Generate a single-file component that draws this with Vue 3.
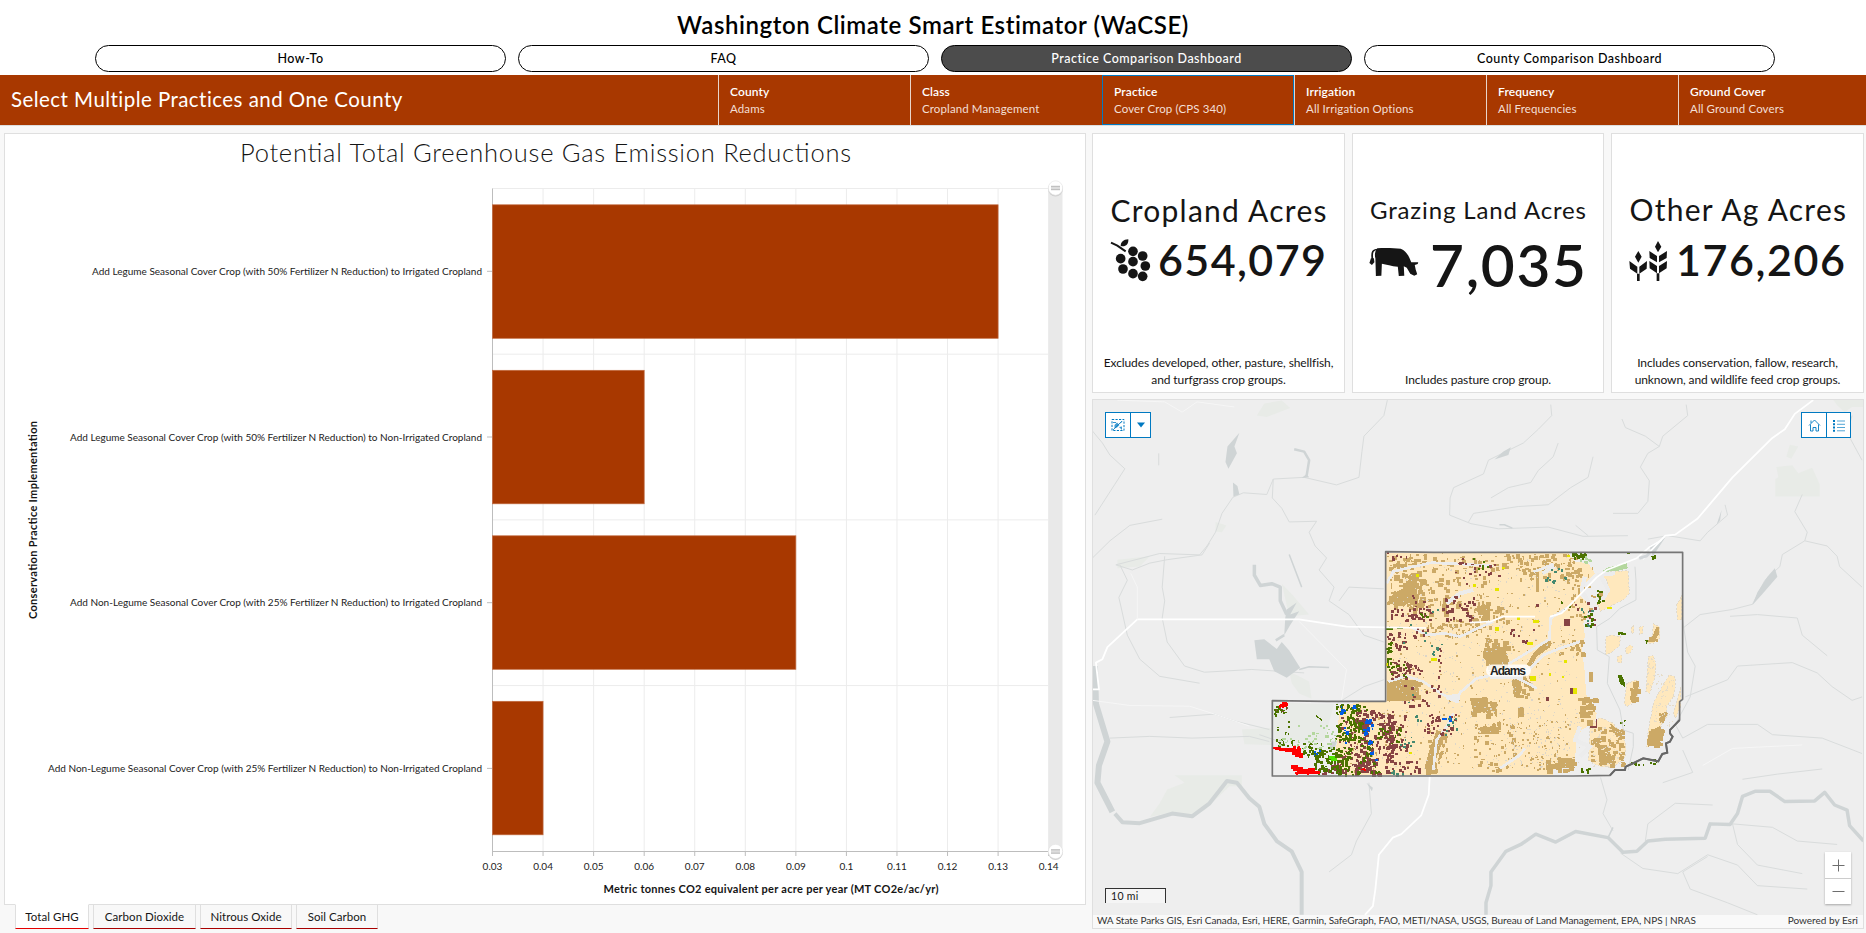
<script setup>
const pages = [
  { name: 'How-To' },
  { name: 'FAQ' },
  { name: 'Practice Comparison Dashboard', active: true },
  { name: 'County Comparison Dashboard' },
]

const filters = [
  { label: 'County', value: 'Adams' },
  { label: 'Class', value: 'Cropland Management' },
  { label: 'Practice', value: 'Cover Crop (CPS 340)', active: true },
  { label: 'Irrigation', value: 'All Irrigation Options' },
  { label: 'Frequency', value: 'All Frequencies' },
  { label: 'Ground Cover', value: 'All Ground Covers' },
]

const tabs = [
  { name: 'Total GHG', active: true, w: 74 },
  { name: 'Carbon Dioxide', w: 103 },
  { name: 'Nitrous Oxide', w: 92 },
  { name: 'Soil Carbon', w: 82 },
]

// Chart geometry
const left = 488.5
const top = 54.5
const step = 50.56
const rowH = 165.7
const ticks = ['0.03', '0.04', '0.05', '0.06', '0.07', '0.08', '0.09', '0.1', '0.11', '0.12', '0.13', '0.14']
const bars = [
  { label: 'Add Legume Seasonal Cover Crop (with 50% Fertilizer N Reduction) to Irrigated Cropland', value: 0.13, len: 390 },
  { label: 'Add Legume Seasonal Cover Crop (with 50% Fertilizer N Reduction) to Non-Irrigated Cropland', value: 0.06, len: 412 },
  { label: 'Add Non-Legume Seasonal Cover Crop (with 25% Fertilizer N Reduction) to Irrigated Cropland', value: 0.09, len: 412 },
  { label: 'Add Non-Legume Seasonal Cover Crop (with 25% Fertilizer N Reduction) to Non-Irrigated Cropland', value: 0.04, len: 434 },
]
const barW = (v) => ((v - 0.03) / 0.01) * step

// Crop parcels: seeded scatter inside zones [x, y, w, h, count, minSize, maxSize]
let seed = 7
const rnd = () => {
  seed = (seed * 16807) % 2147483647
  return seed / 2147483647
}
const snap = (v) => Math.round(v / 3) * 3
function scatter(zones) {
  let d = ''
  for (const [x, y, w, h, n, lo, hi] of zones) {
    for (let i = 0; i < n; i++) {
      const px = snap(x + rnd() * w)
      const py = snap(y + rnd() * h)
      const a = snap(lo + rnd() * (hi - lo))
      const b = snap(lo + rnd() * (hi - lo))
      d += `M${px} ${py}h${a}v${b}h-${a}z`
    }
  }
  return d
}
const parcels = [
  { color: '#cca966', d: scatter([
    [380, 60, 110, 140, 75, 4, 18], [380, 40, 570, 50, 120, 3, 14], [440, 110, 160, 110, 60, 4, 16],
    [380, 410, 90, 60, 25, 6, 22], [480, 240, 170, 45, 60, 3, 12], [630, 190, 110, 60, 45, 4, 14],
    [668, 290, 75, 90, 45, 4, 16], [630, 470, 75, 55, 22, 5, 20], [750, 390, 60, 90, 30, 4, 16],
    [640, 540, 120, 150, 55, 3, 13], [500, 570, 60, 120, 35, 4, 14], [780, 60, 180, 60, 35, 4, 14],
    [930, 80, 70, 160, 38, 4, 12], [860, 300, 110, 40, 25, 4, 14], [950, 470, 50, 70, 26, 6, 20],
    [380, 40, 570, 650, 330, 2, 7], [270, 500, 130, 200, 40, 2, 8], [860, 650, 80, 40, 30, 5, 18],
    [740, 540, 190, 150, 90, 2, 7], [640, 100, 50, 200, 30, 3, 14],
  ]) },
  { color: '#ddd6c8', d: scatter([[390, 50, 560, 640, 480, 2, 5], [260, 500, 130, 190, 60, 2, 5], [730, 530, 230, 150, 90, 2, 5]]) },
  { color: '#874444', d: scatter([
    [392, 200, 120, 40, 34, 5, 9], [545, 168, 95, 70, 38, 5, 10], [450, 165, 50, 70, 12, 4, 8],
    [380, 275, 60, 50, 24, 4, 10], [380, 360, 70, 60, 34, 4, 9], [425, 375, 60, 30, 14, 4, 9],
    [455, 260, 60, 50, 9, 5, 9], [530, 325, 10, 150, 12, 5, 8], [430, 430, 90, 70, 14, 5, 10],
    [280, 510, 120, 190, 175, 4, 13], [230, 530, 60, 160, 60, 3, 9], [380, 520, 60, 130, 40, 5, 11],
    [490, 520, 100, 60, 34, 5, 10], [400, 660, 80, 40, 18, 5, 10], [580, 40, 90, 90, 12, 4, 8],
    [630, 70, 90, 40, 10, 4, 9], [750, 255, 70, 55, 9, 5, 9], [945, 170, 60, 90, 10, 5, 9],
    [380, 35, 60, 30, 7, 4, 8], [175, 660, 80, 40, 25, 4, 9], [45, 485, 35, 30, 10, 3, 6],
    [280, 640, 60, 60, 35, 5, 13],
  ]) },
  { color: '#4b7300', d: scatter([
    [225, 490, 65, 110, 75, 4, 10], [160, 620, 110, 75, 110, 4, 11], [120, 605, 70, 40, 32, 3, 9],
    [270, 485, 50, 120, 35, 4, 10], [290, 600, 60, 90, 30, 4, 9], [350, 560, 70, 50, 24, 4, 8],
    [378, 300, 12, 90, 20, 4, 9], [380, 370, 60, 40, 14, 4, 8], [480, 215, 30, 25, 6, 4, 8],
    [42, 495, 40, 30, 24, 3, 8], [45, 540, 40, 45, 8, 3, 7], [45, 595, 60, 20, 22, 3, 8],
    [970, 210, 30, 50, 11, 4, 9], [1010, 140, 18, 45, 10, 4, 8], [935, 38, 40, 14, 18, 4, 9],
    [1060, 275, 35, 10, 5, 4, 9], [960, 682, 30, 12, 8, 4, 9], [1100, 665, 80, 8, 8, 4, 8],
    [230, 690, 130, 12, 16, 4, 9], [600, 55, 110, 50, 8, 4, 7], [900, 180, 30, 30, 5, 3, 6],
    [1080, 515, 18, 55, 6, 3, 6],
  ]) },
  { color: '#b4d79e', d: scatter([[115, 555, 110, 70, 26, 3, 10], [55, 590, 60, 30, 14, 3, 8], [960, 45, 30, 20, 7, 4, 10], [195, 540, 30, 60, 9, 3, 9]]) },
  { color: '#ff0000', d: 'M40 621H62V624H100V618H108V627H124V640H130V655H118V650H106V645H96V636H76V633H58V630H46V627H40ZM93 676H114V682H130V688H145V685H165V694H180V702H112V694H100V688H93Z' + scatter([[55, 485, 26, 15, 22, 4, 10], [100, 618, 24, 20, 12, 4, 9], [105, 683, 55, 15, 12, 4, 9], [303, 685, 10, 10, 3, 4, 6]]) },
  { color: '#005ce6', d: scatter([[240, 488, 45, 30, 12, 4, 10], [305, 535, 32, 48, 24, 4, 10], [250, 560, 15, 60, 8, 4, 8], [310, 600, 45, 60, 9, 4, 10], [545, 525, 25, 20, 6, 4, 8], [158, 628, 20, 15, 5, 4, 8]]) },
  { color: '#448970', d: scatter([[850, 80, 65, 50, 13, 5, 9], [512, 320, 20, 30, 5, 5, 9], [420, 590, 40, 30, 9, 4, 8], [550, 520, 40, 70, 10, 4, 8], [440, 450, 40, 100, 6, 4, 8], [960, 195, 40, 65, 7, 4, 9], [380, 690, 50, 14, 6, 4, 9], [425, 200, 120, 140, 8, 4, 8]]) },
  { color: '#e6e600', d: 'M514 353h18v9h-18zM468 102h9v8h-9zM640 132h8v10h-8zM706 145h12v8h-12zM706 262h12v12h-12zM820 240h16v9h-16zM772 232h8v7h-8zM802 306h16v9h-16zM810 408h18v16h-18zM912 360h9v8h-9zM940 444h10v17h-10zM905 408h8v7h-8zM867 400h6v8h-6zM448 635h8v6h-8zM922 45h8v6h-8zM1040 202h16v5h-16zM725 80h10v6h-10zM378 370h6v7h-6z' },
]
const east = [
  '1020,105 1050,95 1105,92 1108,160 1090,180 1060,195 1020,215 1012,185 1030,170 1050,155 1040,120',
  '1038,290 1055,285 1082,290 1078,318 1050,340 1038,345',
  '1180,250 1200,262 1200,295 1180,310 1160,310 1178,285',
  '1250,195 1266,165 1266,240 1252,240',
  '1165,350 1180,345 1188,375 1185,410 1170,460 1158,455',
  '1212,430 1228,405 1245,410 1246,440 1240,470 1220,500 1222,530 1200,560 1180,610 1160,622 1165,570 1175,520 1180,490',
  '1252,480 1262,440 1262,500 1246,535 1240,520',
  '1100,430 1130,420 1138,440 1130,480 1100,500 1093,490',
  '990,560 1020,532 1060,550 1080,580 1098,610 1096,650 1060,682 1020,680 985,660 988,610',
  '1072,350 1085,345 1085,370 1072,365',
  '1098,325 1110,315 1120,320 1110,340 1098,342',
  '1114,262 1122,255 1122,275 1115,282',
  '1138,262 1150,258 1148,280 1140,284',
]
const eastBrown = scatter([[990, 560, 95, 110, 70, 5, 16], [1108, 425, 20, 60, 12, 6, 16], [1163, 565, 35, 45, 30, 8, 18], [1160, 290, 30, 12, 6, 5, 10], [1195, 510, 20, 30, 5, 5, 12]])
const eastGap = scatter([[990, 560, 100, 120, 70, 2, 5], [1180, 400, 60, 160, 60, 2, 5], [1160, 350, 26, 90, 20, 2, 5]])
</script>

<template>
  <div class="app">
    <header class="head">
      <h1>Washington Climate Smart Estimator (WaCSE)</h1>
      <nav class="pages">
        <a v-for="p in pages" :key="p.name" :class="{ on: p.active }">{{ p.name }}</a>
      </nav>
    </header>

    <section class="bar">
      <div class="bar-title"><span>Select Multiple Practices and One County</span></div>
      <div v-for="f in filters" :key="f.label" class="filter" :class="{ focus: f.active }">
        <b>{{ f.label }}</b>
        <span>{{ f.value }}</span>
      </div>
    </section>

    <main class="body">
      <div class="col-left">
        <section class="panel chart">
          <svg width="1080" height="770" viewBox="1 0 1080 770">
            <text class="c-title" x="236" y="28" textLength="611">Potential Total Greenhouse Gas Emission Reductions</text>
            <g class="grid">
              <line v-for="(t, i) in ticks" :key="t" :x1="left + i * step" :x2="left + i * step" :y1="top" y2="717" />
              <line v-for="i in 4" :key="i" :x1="left" x2="1044" :y1="top + (i - 1) * rowH" :y2="top + (i - 1) * rowH" />
            </g>
            <g class="axis">
              <path :d="`M${left} ${top}V717.5H1044.5`" />
              <line v-for="(t, i) in ticks" :key="t" :x1="left + i * step" :x2="left + i * step" y1="717" y2="722" />
              <line v-for="(b, i) in bars" :key="i" x1="483" x2="488" :y1="137.3 + i * rowH" :y2="137.3 + i * rowH" />
            </g>
            <g v-for="(b, i) in bars" :key="b.label">
              <rect class="c-bar" :x="left" :y="70.8 + i * 165.5" :width="barW(b.value)" height="133.5" />
              <text class="c-cat" x="478" :y="140.8 + i * rowH" :textLength="b.len">{{ b.label }}</text>
            </g>
            <text v-for="(t, i) in ticks" :key="t" class="c-tick" :x="left + i * step" y="736">{{ t }}</text>
            <text class="c-axis" x="599.5" y="759" textLength="335">Metric tonnes CO2 equivalent per acre per year (MT CO2e/ac/yr)</text>
            <text class="c-axis" transform="translate(33 485) rotate(-90)" textLength="198">Conservation Practice Implementation</text>
            <rect x="1044.500" y="54" width="14" height="663" fill="#e9e9e9" />
            <g v-for="y in [54, 717.5]" :key="y">
              <circle cx="1051.500" :cy="y + 1" r="7.4" fill="#cfcfcf" />
              <circle cx="1051.500" :cy="y" r="7.2" fill="#fff" stroke="#e2e2e2" stroke-width=".6" />
              <rect x="1047" :y="y - 2" width="9" height="4" fill="#ddd" />
              <path :d="`M1047 ${y - 1.7}h9M1047 ${y + 1.7}h9`" stroke="#bbb" />
            </g>
          </svg>
        </section>
        <nav class="tabs">
          <a v-for="t in tabs" :key="t.name" :class="{ on: t.active }" :style="{ width: t.w + 'px' }">{{ t.name }}</a>
        </nav>
      </div>

      <div class="col-right">
        <div class="stats">
          <section class="panel stat">
            <svg viewBox="1093 134 251 218">
              <text class="s-name" x="1110.500" y="221.5" font-size="30" textLength="216">Cropland Acres</text>
              <g transform="translate(1100 230) scale(.3333)" fill="#151515">
                <circle v-for="c in [[99,64],[128,78],[62,86],[99,95],[136,108],[69,117],[99,131],[128,139]]" :key="c.join()" :cx="c[0]" :cy="c[1]" r="14.500" />
                <path d="M62 48C62 36 70 29 85 28C86 42 78 50 66 49Z" />
                <path d="M33 38L52 47L77 64" fill="none" stroke="#151515" stroke-width="6" />
              </g>
              <text class="s-num" x="1158" y="275.500" font-size="43" textLength="168">654,079</text>
            </svg>
            <p>Excludes developed, other, pasture, shellfish,<br>and turfgrass crop groups.</p>
          </section>
          <section class="panel stat">
            <svg viewBox="1353 134 251 218">
              <text class="s-name" x="1370" y="219" font-size="24" textLength="216">Grazing Land Acres</text>
              <g transform="translate(1085 125) scale(.4981 .3333)">
                <path fill="#151515" d="M587 370C600 368 620 369 634 371C645 378 650 392 655 412L669 412L668 417L662 420L664 434L667 448L661 452L653 446L646 428L640 424L641 452L630 453L628 425C615 424 605 418 596 416L595 452L584 453L583 400C581 390 582 378 587 370Z" />
                <path d="M588 373C578 374 575 380 577 402" fill="none" stroke="#151515" stroke-width="3.500" />
                <path fill="#151515" d="M574 400L580 400L581 412L576 420L571 414Z" />
              </g>
              <text class="s-num" x="1430" y="287" font-size="58.500" textLength="156">7,035</text>
            </svg>
            <p>Includes pasture crop group.</p>
          </section>
          <section class="panel stat">
            <svg viewBox="1612 134 251 218">
              <text class="s-name" x="1629.500" y="220.500" font-size="30" textLength="216.500">Other Ag Acres</text>
              <g transform="translate(1620 230) scale(.3333)" fill="#151515">
                <path d="M55 63L65 80L55 98L45 80ZM28 93L52 110V131L30 116ZM81 93L58 110V131L80 116ZM51 131h8v22h-8ZM114 33L124 50L114 67L105 50ZM88 63L111 78V97L89 84ZM141 63L117 78V97L140 84ZM88 93L111 108V130L89 115ZM141 93L117 108V130L140 115ZM110 130h8v23h-8Z" />
              </g>
              <text class="s-num" x="1676" y="275.500" font-size="43" textLength="169">176,206</text>
            </svg>
            <p>Includes conservation, fallow, research,<br>unknown, and wildlife feed crop groups.</p>
          </section>
        </div>

        <section class="panel map">
          <svg class="canvas" width="770" height="528" viewBox="0 0 770 528">
            <rect width="770" height="528" fill="#eee" />
            <g class="base" transform="translate(-8 -5) scale(.4981 .3431)">
              <path class="park" d="M1388 210L1420 205L1432 228L1460 212L1475 260V296H1386V245L1392 240ZM360 25L395 16L412 38L365 64L345 60ZM180 1108H315V1140H290L240 1210L215 1230L180 1215L130 1230L150 1190L165 1150L200 1130ZM1500 10H1565V35H1540L1525 50L1510 30ZM1415 145L1432 150L1418 186L1408 180ZM410 805L450 835L455 885L430 870L415 840ZM375 895L460 900L500 900L480 1010L400 1015L380 1000ZM315 975L375 970V1020L320 1018ZM65 480L130 470L110 500L65 505ZM262 370L284 380L275 400L262 398ZM395 550L415 580L450 640L410 645Z" />
              <g class="stream">
                <path d="M607 15L600 60L560 120L556 165L550 240L505 262L440 240L378 245L365 290L318 285L297 298L275 345L262 400L245 440L230 466L150 462L62 495L95 510L130 490L165 480L235 466L250 432M378 245L376 300L395 330L410 370L465 368L450 400L462 440L485 475L470 510L500 560L490 600L530 640L560 700L600 720M15 105L35 140L50 175L80 215L60 260L20 350M148 170V205M160 470L155 560L160 600L155 650L165 720L200 790L240 808L335 800L440 810M70 495L85 540L68 590L85 700L110 770L150 820L230 840M15 475L50 425L90 380L155 362M935 28L937 60L910 100L880 140L810 190L800 230L740 270L733 300L732 350L775 375L830 390L930 385L1000 412L1090 410M1020 180L1010 240L975 270L930 320L870 325L780 345L770 370M950 140L940 180L910 220L895 255L850 270L815 300M1207 28L1210 60L1160 120L1153 150L1130 170L1115 210L1133 250L1130 310L1110 345L1060 345M1078 70L1085 95L1125 120L1153 150M1440 290L1425 340L1450 400L1445 425L1400 465L1395 500L1365 540L1340 610L1300 625L1235 640L1200 680M1445 425L1490 440L1510 470L1515 500L1560 560M1285 320L1290 350L1250 400L1235 425L1170 410L1130 420M1200 660L1210 750L1225 790L1215 880L1185 960L1200 1000L1250 960L1350 960L1380 990L1480 1000L1560 1045M1205 880L1290 830L1310 790L1420 780L1470 810L1500 850L1540 890L1560 880M1295 645L1350 640L1430 650L1440 700L1490 760M50 1000L130 995L215 1000L330 995L370 1010M170 940L260 930L300 950L370 975M505 900L560 850L600 830M510 600L530 560L600 565M1035 1115L1048 1180L1040 1220L1060 1270M1125 1300L1130 1250L1185 1190L1260 1195M1300 1250L1380 1260L1430 1300L1510 1310M1075 1335L1120 1380L1190 1395L1250 1340L1310 1370L1350 1430L1450 1440M1250 1345L1200 1390L1215 1440L1290 1480L1350 1515M1300 1250L1310 1310L1350 1370L1440 1395M570 1130L575 1220L545 1300L535 1340L490 1390M1200 1035L1220 1100L1160 1130M1320 1120L1390 1105L1480 1090M1540 60L1530 110L1560 190M1010 410L985 380M400 1015L350 990" />
              </g>
              <g class="water">
                <path d="M310 110L300 150L305 170L288 215L282 195L286 150ZM297 255L306 265L310 290L298 296ZM340 715L360 712L385 740L395 720L410 745L432 795L405 824L380 805L370 770L345 770ZM405 625L425 605L412 640L430 630L412 670L400 700L402 650ZM1133 440L1165 415L1140 470ZM1385 505L1390 530L1360 580L1340 612L1350 575L1370 530ZM855 152L850 175L822 188L840 165ZM445 230L450 240L435 242ZM1278 335L1275 365L1268 378ZM565 1130L578 1145L576 1155ZM495 1010L506 1010L500 1035L490 1030Z" />
                <path class="w5" d="M340 495V525L352 555L375 550L392 560V600L405 640" />
                <path class="w4" d="M420 158L440 165L450 190L445 235M400 700L383 715" />
                <path class="w2" d="M430 800L450 792L490 794" />
                <path class="w8" d="M20 790L22 900L45 1010L28 1080L25 1130L55 1215" />
                <path class="w6" d="M60 1220L75 1245L110 1248L175 1220L215 1228L250 1190L285 1125L305 1130L330 1175L350 1200L360 1250L385 1300L415 1330L435 1390V1515" />
                <path class="w5" d="M805 1515V1480L815 1430V1390L845 1330L875 1310L905 1280L945 1303L985 1272L1050 1290L1080 1333L1108 1330L1130 1300L1165 1295L1245 1292L1255 1250L1295 1252L1310 1220L1320 1170L1345 1155L1375 1155L1405 1185L1465 1183L1485 1158L1505 1195L1530 1210L1535 1255L1563 1300" />
                <path class="w2" d="M832 378H842L858 388M1050 1290L1060 1260M410 465L435 560" />
              </g>
              <g class="road">
                <path d="M15 858H28L22 780L35 770L45 735L105 654H430L525 675L605 677" />
                <path d="M1462 15L1425 55L1405 100L1380 125L1300 240L1230 360L1185 407L1165 410L1120 478" />
                <path d="M692 1112L690 1165L675 1225L635 1280L618 1290L590 1340L583 1440L578 1490L562 1515" />
                <path class="thin" d="M105 654V560L92 520M430 660L525 800L515 890M15 890L90 905L210 907L260 930L330 965M1240 1080L1300 1030L1440 1020M65 15L160 20L195 50L225 20L300 35" />
              </g>
            </g>

            <g transform="translate(167 140) scale(.3333)" shape-rendering="crispEdges">
              <path fill="#ffe8bd" d="M377 38H925L945 65L985 70L1005 100L975 130L960 165L990 200L970 250L975 290L965 320L975 400L978 460L990 500L1010 520L1005 545L965 570L950 600L945 660L880 690V706H250L225 640L232 600L238 500L300 486H377Z" />
              <path fill="#cca966" d="M672 325H735L750 372H690L668 350ZM800 375L820 340L855 305L875 310L870 322L830 350L815 380ZM385 420H470L478 465L450 482H380V440ZM500 706L495 680L505 640L530 570L560 580L545 610L528 660L535 700ZM380 190L400 160L440 140L452 100L470 100V170L430 200ZM630 475H685V515H640ZM755 420H785L780 475L762 470ZM672 562H716V582H660ZM775 500H792V530H775ZM858 660H872V690H858ZM895 655H935L945 685H890ZM790 410L815 430L810 445L795 440ZM820 95H838V155H828V105H820ZM988 395H999V425H988ZM670 195H690V245H670ZM1015 160H1030V195H1010Z" />
              <polygon v-for="(p, i) in east" :key="i" :points="p" fill="#ffe8bd" stroke="#ddd6c8" stroke-width="2.500" stroke-dasharray="6 5" />
              <path fill="#cca966" d="M1118 428L1136 422V440L1128 470L1112 482L1110 470L1122 450ZM1168 575L1200 558L1205 570L1190 605L1165 622L1160 610ZM1188 262H1196V285L1180 305H1160L1180 285ZM1205 520L1225 520L1205 545L1195 540ZM1012 620L1050 650L1070 640L1060 670L1020 678ZM1050 550L1085 575V600L1060 580Z" />
              <path fill="#b4d79e" d="M1028 92L1045 82L1075 75L1100 70L1104 85L1075 92L1030 96Z" />
              <path :d="eastBrown" fill="#cca966" />
              <path :d="eastGap" fill="#e6dcc8" />
              <path :d="parcels[0].d" :fill="parcels[0].color" />
              <path :d="parcels[1].d" :fill="parcels[1].color" />
              <g class="coulee">
                <path d="M380 130L400 95L460 80L515 68L600 72L700 78M820 95L850 85L880 72" />
                <path d="M455 262L500 285L555 280L600 290L660 262L700 245" />
                <path d="M385 425L440 408L490 425L545 462L590 485L600 458L650 415L740 398L800 428L830 445" />
                <path d="M745 372L790 345L868 298L872 235L920 205M800 395L850 345L900 325L960 305" />
                <path d="M520 690L530 600L560 560L580 520M720 685L780 645L795 625" />
                <path class="w3" d="M975 110L965 150L985 185M960 560L945 600L990 620L960 650M560 190L600 160L640 150M1065 100L1020 105L1045 150L1030 175L1010 185" />
              </g>
              <path fill="#ececec" d="M555 465L600 462L598 490L560 478ZM560 180L600 160V172L570 190ZM690 400H790V416H690ZM845 95L880 75L885 85L850 105Z" />
              <path v-for="p in parcels.slice(2)" :key="p.color" :d="p.d" :fill="p.color" />
              <path fill="#4b7300" d="M1073 405L1085 405L1096 430L1095 442L1080 430ZM1174 48L1188 45V55L1178 62ZM1155 300L1165 300L1160 312ZM1175 655L1195 660L1190 668ZM938 40L950 40L965 52L955 58ZM1100 40L1110 38V44ZM376 263H400V270H376ZM410 263H430V267H410ZM168 525L186 538V543L168 530Z" />
              <path fill="#4ce600" d="M208 648H226V655H232V663H214V657H208Z" />
              <path fill="#874444" d="M912 238H930V258H912ZM930 445H939V461H930ZM990 557H1007V537H1012V563H990ZM857 472H867V483H857ZM448 495H464V504H448ZM828 193H837V200H828Z" />
            </g>
            <g transform="translate(167 140) scale(.3333)" fill="none">
              <path stroke="#d6d9d9" stroke-width="3" d="M1125 80L1128 120L1128 180L1080 205L1050 235L1010 260L1012 330L1048 350L1042 430L1080 510L1090 570L1120 580V620L1105 690" />
              <path stroke="#fff" stroke-width="5" d="M376 262L500 264M630 248L690 245L730 230H825M870 230L905 220L935 190L1010 112M1010 112L1040 90L1130 55L1170 20L1205 0" />
              <path stroke="#d2d6d9" stroke-width="9" d="M1138 55L1160 48L1170 38" />
              <path stroke="#757575" stroke-width="5" stroke-linejoin="round" d="M37 482L200 484H377V35L520 37H1268V478L1259 485V540L1240 560L1230 570V580L1238 590L1230 605L1218 610L1222 638L1207 642L1195 664L1150 655L1115 672L1097 680L1095 690L1065 690L1050 706L940 708H37Z" />
              <path stroke="#666" stroke-width="6" d="M1259 540L1240 560L1230 570V580L1238 590L1230 605L1218 610L1222 638L1207 642L1195 664L1150 655L1115 672L1097 680L1095 690L1065 690L1050 706" />
            </g>
            <path d="M399 270.500H432" stroke="#fff" stroke-width="12" stroke-linecap="round" opacity=".85" />
            <text class="place" x="397" y="274.500" textLength="36">Adams</text>
          </svg>

          <div class="tool tl">
            <i><svg width="14" height="14" viewBox="0 0 14 14"><path d="M1 1.500h12v11H1Z" fill="none" stroke="#0079c1" stroke-dasharray="2.200 1.300" /><path d="M3.500 10.500V7L6 4.500L8.500 7L6 9.500Z M8 9l3 3V8.500Z" fill="#0079c1" opacity=".75" /><path d="M2 4.500h3M9 5.500l2-2M2 12l9-9" stroke="#0079c1" stroke-width=".8" fill="none" /></svg></i>
            <i><svg width="8" height="6" viewBox="0 0 8 6"><path d="M0 .5h8L4 5.500Z" fill="#0079c1" /></svg></i>
          </div>
          <div class="tool tr">
            <i><svg width="13" height="13" viewBox="0 0 13 13"><path d="M1 6.500L6.500 1L12 6.500M2.500 5.500V12H5V8.500h3V12h2.500V5.500M3 4V1.500" fill="none" stroke="#0079c1" stroke-width=".9" /></svg></i>
            <i><svg width="14" height="13" viewBox="0 0 14 13"><path d="M1 1h2v2H1zM1 4.300h2v2H1zM1 7.500h2v2H1zM1 10.800h2v2H1z" fill="#0079c1" /><path d="M5 2h8M5 5.300h8M5 8.500h8M5 11.800h8" stroke="#0079c1" stroke-width=".9" opacity=".75" /></svg></i>
          </div>
          <div class="zoom">
            <i><svg width="13" height="13" viewBox="0 0 13 13"><path d="M6.500 .5v12M.5 6.500h12" stroke="#6e6e6e" /></svg></i>
            <i><svg width="13" height="13" viewBox="0 0 13 13"><path d="M.5 6.500h12" stroke="#6e6e6e" /></svg></i>
          </div>
          <div class="scale">10 mi</div>
          <footer class="attr">
            <span class="src">WA State Parks GIS, Esri Canada, Esri, HERE, Garmin, SafeGraph, FAO, METI/NASA, USGS, Bureau of Land Management, EPA, NPS | NRAS</span>
            <span class="pow">Powered by Esri</span>
          </footer>
        </section>
      </div>
    </main>
  </div>
</template>

<style>
body {
  background: #f8f8f8;
}
</style>

<style scoped>
.app {
  width: 1866px;
  height: 933px;
  overflow: hidden;
  display: flex;
  flex-direction: column;
  background: #f8f8f8;
  color: #151515;
  font-family: Lato, "Open Sans", sans-serif;
}
.app * {
  box-sizing: border-box;
}
.head {
  height: 75px;
  background: #fff;
  color: #000;
  padding-top: 9px;
  text-align: center;
}
h1 {
  margin: 0;
  height: 36px;
  line-height: 31px;
  font-size: 24px;
  font-weight: 600;
  letter-spacing: 0.58px;
}
.pages {
  display: flex;
  gap: 12px;
  padding: 0 91px 0 95px;
}
.pages a {
  flex: 1;
  height: 27px;
  line-height: 25px;
  border: 1px solid #000;
  border-radius: 14px;
  font-size: 12.5px;
  font-weight: 500;
  letter-spacing: 0.48px;
}
.pages a.on {
  background: #4c4c4c;
  color: #fff;
}
.bar {
  height: 51px;
  display: flex;
  background: #a83800;
  color: #fff;
  border-bottom: 1px solid #ddd;
}
.bar-title {
  flex: 1;
  padding-left: 11px;
  line-height: 49px;
  font-size: 20.5px;
  letter-spacing: 0.45px;
}
.filter {
  width: 192px;
  border-left: 1px solid #e8d5cb;
  padding: 7.5px 0 0 11px;
  display: flex;
  flex-direction: column;
  font-size: 12px;
  line-height: 17px;
}
.filter:last-child {
  width: 188px;
}
.filter b {
  font-weight: 600;
  letter-spacing: 0.1px;
}
.filter span {
  color: #f3dfd5;
  font-size: 11.5px;
  letter-spacing: 0.12px;
}
.filter.focus {
  outline: 1px solid #0079c1;
  outline-offset: -1px;
}
.body {
  flex: 1;
  display: flex;
  gap: 6px;
  padding: 7px 2px 4px 4px;
}
.panel {
  background: #fff;
  border: 1px solid #dfdfdf;
}
.col-left {
  width: 1082px;
}
.chart {
  height: 772px;
}
svg {
  display: block;
}
.c-title {
  font-size: 25.5px;
  font-weight: 300;
  fill: #151515;
}
.c-cat,
.c-tick {
  font-size: 10px;
  fill: #222;
}
.c-cat {
  text-anchor: end;
}
.c-tick {
  text-anchor: middle;
}
.c-axis {
  font-size: 11px;
  font-weight: 700;
  fill: #151515;
}
.c-bar {
  fill: #a83800;
  stroke: #c26a40;
  stroke-width: 0.7;
}
.grid line {
  stroke: #ececec;
}
.axis line,
.axis path {
  fill: none;
  stroke: #bdbdbd;
}
.tabs {
  display: flex;
  gap: 4px;
  margin: -1px 0 0 11px;
  position: relative;
}
.tabs a {
  height: 25px;
  line-height: 23px;
  text-align: center;
  font-size: 11.5px;
  letter-spacing: 0.05px;
  border: 1px solid #dfdfdf;
  border-bottom-color: #a80000;
}
.tabs a.on {
  background: #fff;
  border-top-color: #fff;
  border-bottom-color: #e60000;
}
.col-right {
  width: 772px;
  display: flex;
  flex-direction: column;
  gap: 6px;
}
.stats {
  height: 260px;
  display: grid;
  grid-template-columns: 253px 252px 253px;
  gap: 7px;
}
.stat {
  display: flex;
  flex-direction: column;
  justify-content: space-between;
}
.stat svg {
  width: 251px;
  height: 218px;
}
.s-name {
  fill: #151515;
}
.s-num {
  fill: #151515;
  font-weight: 600;
}
.stat p {
  margin: 0 0 4px;
  text-align: center;
  white-space: nowrap;
  font-size: 12px;
  line-height: 17px;
  letter-spacing: -0.1px;
}
.map {
  position: relative;
  height: 530px;
}
.base path {
  vector-effect: non-scaling-stroke;
  stroke-linejoin: round;
}
.park {
  fill: #e8ebe7;
}
.stream path {
  fill: none;
  stroke: #d9dcdc;
  stroke-width: 1;
}
.water path {
  fill: #cfd4d5;
}
.water path[class] {
  fill: none;
  stroke: #cfd4d5;
}
.water .w2 {
  stroke-width: 1.5;
}
.water .w4 {
  stroke-width: 2.5;
}
.water .w5 {
  stroke-width: 3.5;
}
.water .w6 {
  stroke-width: 4;
}
.water .w8 {
  stroke-width: 6;
}
.road path {
  fill: none;
  stroke: #fff;
  stroke-width: 1.8;
}
.road .thin {
  stroke: #f6f6f6;
  stroke-width: 1;
}
.coulee path {
  fill: none;
  stroke: #ececec;
  stroke-width: 8;
}
.coulee .w3 {
  stroke-width: 12;
}
.place {
  font: 700 12px "Liberation Sans", Arial, sans-serif;
  fill: #222;
}
.tool,
.zoom,
.scale,
.attr {
  position: absolute;
}
.tool {
  top: 12px;
  height: 26px;
  display: flex;
  background: #fff;
  border: 1px solid #0079c1;
}
.tool i,
.zoom i {
  display: flex;
  align-items: center;
  justify-content: center;
}
.tool i + i {
  border-left: 1px solid #0079c1;
}
.tl {
  left: 12px;
}
.tl i:first-child {
  width: 24px;
}
.tl i:last-child {
  width: 20px;
}
.tr {
  right: 12px;
}
.tr i {
  width: 24px;
}
.zoom {
  right: 12px;
  top: 452px;
  width: 26px;
  background: #fff;
  box-shadow: 0 1px 2px rgba(0, 0, 0, 0.3);
}
.zoom i {
  height: 26px;
}
.zoom i + i {
  border-top: 1px solid #ccc;
}
.scale {
  left: 12px;
  top: 488px;
  width: 61px;
  height: 15px;
  padding-left: 5px;
  border: 1px solid #323232;
  border-bottom: 0;
  background: rgba(255, 255, 255, 0.4);
  font-size: 10.5px;
  line-height: 15px;
  letter-spacing: 0.3px;
}
.attr {
  left: 0;
  right: 0;
  bottom: 0;
  height: 13px;
  padding: 0 5px 0 4px;
  display: flex;
  justify-content: space-between;
  background: rgba(255, 255, 255, 0.65);
  color: #323232;
  font-size: 10px;
  line-height: 11px;
  white-space: nowrap;
}
.src {
  letter-spacing: -0.065px;
}
</style>
